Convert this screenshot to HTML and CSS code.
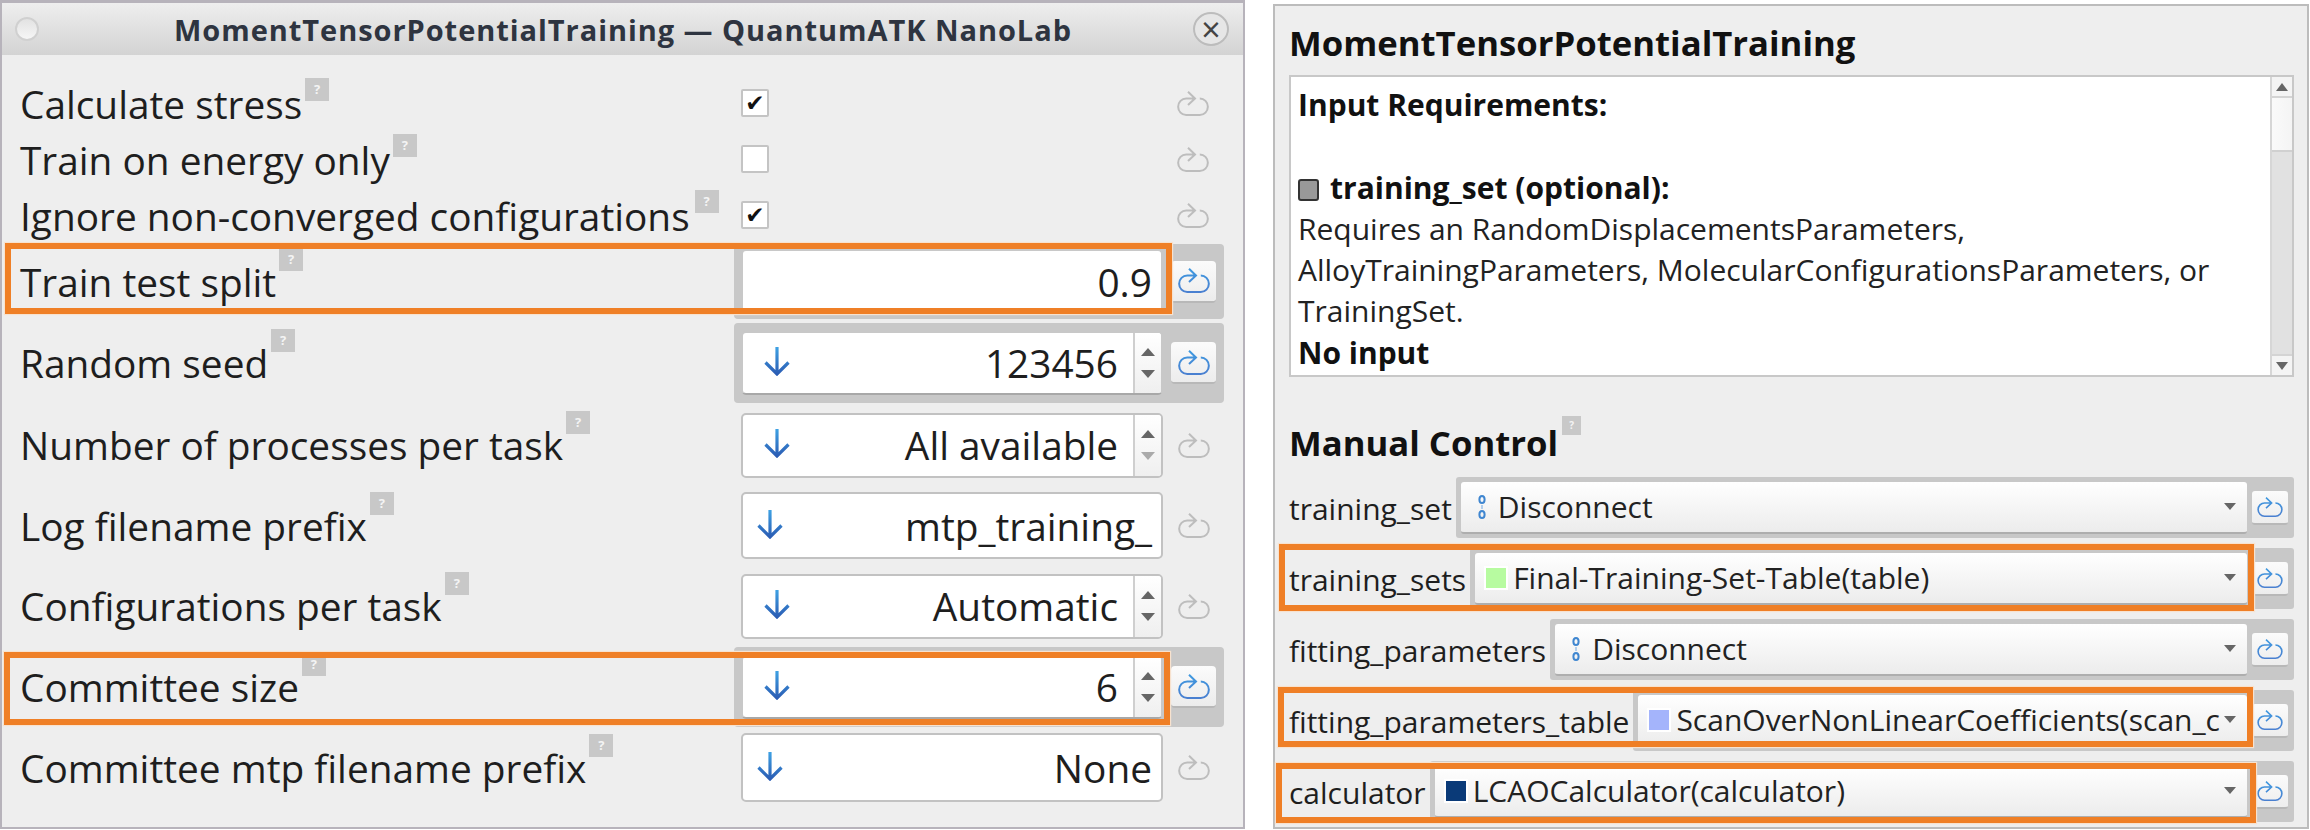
FILE: index.html
```html
<!DOCTYPE html>
<html lang="en">
<head>
<meta charset="utf-8">
<title>MomentTensorPotentialTraining</title>
<link rel="stylesheet" href="styles.css">
</head>
<body>
<svg class="defs" width="0" height="0" aria-hidden="true">
  <defs>
    <linearGradient id="blue" x1="0" y1="0" x2="0" y2="1">
      <stop offset="0" stop-color="#3ea2e4"/>
      <stop offset="1" stop-color="#2b5db4"/>
    </linearGradient>
    <linearGradient id="blueLoop" gradientUnits="userSpaceOnUse" x1="0" y1="0" x2="0" y2="25">
      <stop offset="0" stop-color="#3f9ae0"/>
      <stop offset="1" stop-color="#4a7fd0"/>
    </linearGradient>
    <symbol id="loop" viewBox="0 0 32 25">
      <path d="M11 .8 18 7.5 11 14M18 7.5H9.2A8 8.2 0 0 0 9.2 24H22.8A8 8.2 0 0 0 22.8 7.5" fill="none" stroke-width="2"/>
    </symbol>
    <symbol id="down" viewBox="0 0 28 30">
      <path d="M14 1V28M2.5 16.5 14 28 25.5 16.5" fill="none" stroke="url(#blue)" stroke-width="3.2"/>
    </symbol>
    <symbol id="link" viewBox="0 0 8 24">
      <g fill="none" stroke="#3f86d0" stroke-width="2"><ellipse cx="4" cy="4.5" rx="2.6" ry="3.5"/><ellipse cx="4" cy="19.5" rx="2.6" ry="3.5"/></g>
      <path d="M4 10v4" stroke="#9cc2e8" stroke-width="1.5"/>
    </symbol>
  </defs>
</svg>

<main class="desk">
  <section class="win">
    <header class="titlebar">
      <span class="dot"></span>
      <span class="wintitle">MomentTensorPotentialTraining — QuantumATK NanoLab</span>
      <span class="close">×</span>
    </header>
    <div class="form">
      <div class="row row-check">
        <div class="lab"><span>Calculate stress</span><i class="help">?</i></div>
        <div class="group"><span class="check">✔</span><span class="reset"><svg class="loop"><use href="#loop"/></svg></span></div>
      </div>
      <div class="row row-check">
        <div class="lab"><span>Train on energy only</span><i class="help">?</i></div>
        <div class="group"><span class="check"></span><span class="reset"><svg class="loop"><use href="#loop"/></svg></span></div>
      </div>
      <div class="row row-check">
        <div class="lab"><span>Ignore non-converged configurations</span><i class="help help-wide">?</i></div>
        <div class="group"><span class="check">✔</span><span class="reset"><svg class="loop"><use href="#loop"/></svg></span></div>
      </div>

      <div class="row row-split">
        <div class="lab"><span>Train test split</span><i class="help">?</i></div>
        <div class="group on"><div class="input"><span class="val">0.9</span></div><span class="reset btn"><svg class="loop"><use href="#loop"/></svg></span></div>
      </div>
      <div class="row row-seed">
        <div class="lab"><span>Random seed</span><i class="help">?</i></div>
        <div class="group on"><div class="input spin"><svg class="arrow"><use href="#down"/></svg><span class="val">123456</span><span class="spinner"><b class="up"></b><b class="dn"></b></span></div><span class="reset btn"><svg class="loop"><use href="#loop"/></svg></span></div>
      </div>
      <div class="row row-proc">
        <div class="lab"><span>Number of processes per task</span><i class="help">?</i></div>
        <div class="group"><div class="input spin"><svg class="arrow"><use href="#down"/></svg><span class="val">All available</span><span class="spinner"><b class="up"></b><b class="dn off"></b></span></div><span class="reset"><svg class="loop"><use href="#loop"/></svg></span></div>
      </div>
      <div class="row row-log">
        <div class="lab"><span>Log filename prefix</span><i class="help">?</i></div>
        <div class="group"><div class="input"><svg class="arrow"><use href="#down"/></svg><span class="val">mtp_training_</span></div><span class="reset"><svg class="loop"><use href="#loop"/></svg></span></div>
      </div>
      <div class="row row-auto">
        <div class="lab"><span>Configurations per task</span><i class="help">?</i></div>
        <div class="group"><div class="input spin"><svg class="arrow"><use href="#down"/></svg><span class="val">Automatic</span><span class="spinner"><b class="up"></b><b class="dn"></b></span></div><span class="reset"><svg class="loop"><use href="#loop"/></svg></span></div>
      </div>
      <div class="row row-size">
        <div class="lab"><span>Committee size</span><i class="help">?</i></div>
        <div class="group on"><div class="input spin"><svg class="arrow"><use href="#down"/></svg><span class="val">6</span><span class="spinner"><b class="up"></b><b class="dn"></b></span></div><span class="reset btn"><svg class="loop"><use href="#loop"/></svg></span></div>
      </div>
      <div class="row row-none">
        <div class="lab"><span>Committee mtp filename prefix</span><i class="help">?</i></div>
        <div class="group"><div class="input"><svg class="arrow"><use href="#down"/></svg><span class="val">None</span></div><span class="reset"><svg class="loop"><use href="#loop"/></svg></span></div>
      </div>
    </div>
    <div class="mark mark-split"></div>
    <div class="mark mark-size"></div>
  </section>

  <section class="panel">
    <h1 class="ptitle">MomentTensorPotentialTraining</h1>
    <div class="textbox">
      <div class="doc">
        <p class="b">Input Requirements:</p>
        <p>&nbsp;</p>
        <p class="b"><span class="port"></span>training_set (optional):</p>
        <p>Requires an RandomDisplacementsParameters,</p>
        <p>AlloyTrainingParameters, MolecularConfigurationsParameters, or</p>
        <p>TrainingSet.</p>
        <p class="b">No input</p>
      </div>
      <div class="scroll">
        <span class="sbtn"><b class="up"></b></span>
        <span class="thumb"></span>
        <span class="trough"></span>
        <span class="sbtn sbtn-end"><b class="dn"></b></span>
      </div>
    </div>
    <h2 class="manual"><span>Manual Control</span><i class="help help-sm">?</i></h2>
    <div class="ports">
      <div class="prow"><span class="plab">training_set</span><div class="pgroup"><div class="combo"><svg class="linkic"><use href="#link"/></svg><span class="ctext">Disconnect</span><b class="dn"></b></div><span class="reset pbtn"><svg class="loop"><use href="#loop"/></svg></span></div></div>
      <div class="prow"><span class="plab">training_sets</span><div class="pgroup"><div class="combo"><span class="sw sw-green"></span><span class="ctext">Final-Training-Set-Table(table)</span><b class="dn"></b></div><span class="reset pbtn"><svg class="loop"><use href="#loop"/></svg></span></div></div>
      <div class="prow"><span class="plab">fitting_parameters</span><div class="pgroup"><div class="combo"><svg class="linkic"><use href="#link"/></svg><span class="ctext">Disconnect</span><b class="dn"></b></div><span class="reset pbtn"><svg class="loop"><use href="#loop"/></svg></span></div></div>
      <div class="prow"><span class="plab">fitting_parameters_table</span><div class="pgroup"><div class="combo"><span class="sw sw-blue"></span><span class="ctext">ScanOverNonLinearCoefficients(scan_c</span><b class="dn"></b></div><span class="reset pbtn"><svg class="loop"><use href="#loop"/></svg></span></div></div>
      <div class="prow"><span class="plab">calculator</span><div class="pgroup"><div class="combo"><span class="sw sw-navy"></span><span class="ctext">LCAOCalculator(calculator)</span><b class="dn"></b></div><span class="reset pbtn"><svg class="loop"><use href="#loop"/></svg></span></div></div>
    </div>
    <div class="mark mark-sets"></div>
    <div class="mark mark-table"></div>
    <div class="mark mark-calc"></div>
  </section>
</main>
</body>
</html>
```

FILE: styles.css
```css
* { box-sizing: border-box; }
html, body { margin: 0; padding: 0; background: #fff; }
body { font-family: "Open Sans", "Noto Sans", sans-serif; color: #1e1e1e; }
.defs { position: absolute; }
.desk { display: flex; align-items: flex-start; width: 2310px; height: 830px; }

/* left window */
.win {
  position: relative; width: 1245px; height: 829px; flex: none;
  background: #eee; border: 2px solid #b7b3bb; border-top-width: 3px;
}
.titlebar {
  display: flex; align-items: center; justify-content: space-between;
  height: 52px; padding: 0 14px 0 13px;
  background: linear-gradient(#eeeeee, #d3d3d3);
}
.dot { width: 24px; height: 24px; border-radius: 50%; background: linear-gradient(#e2e2e2, #f6f6f6); border: 2px solid #d0d0d0; }
.wintitle { font-weight: 700; font-size: 29px; letter-spacing: .95px; margin-left: 14px; color: #2e3440; white-space: nowrap; }
.close {
  width: 36px; height: 34px; border-radius: 50%; border: 2px solid #bcbcbc; background: #e6e6e6;
  display: flex; align-items: center; justify-content: center;
  font-size: 34px; line-height: 1; color: #444;
}
.form { display: flex; flex-direction: column; padding: 20px 0 0 18px; }
.row { display: flex; align-items: center; justify-content: space-between; }
.row-check { height: 56px; }
.row-split { height: 75px; margin-top: 1px; margin-bottom: 4px; }
.row-seed { height: 80px; margin-bottom: 9px; }
.row-proc { height: 66px; margin-bottom: 14px; }
.row-log { height: 67px; margin-bottom: 14px; }
.row-auto { height: 66px; margin-bottom: 8px; }
.row-size { height: 80px; margin-bottom: 6px; }
.row-none { height: 69px; }

.lab { display: flex; align-items: flex-start; height: 64px; font-size: 38.8px; line-height: 64px; white-space: nowrap; }
.row-check .lab { height: 56px; line-height: 56px; padding-top: 1px; }
.help {
  display: flex; align-items: center; justify-content: center;
  width: 24px; height: 23px; margin: -2px 0 0 3px;
  background: #c8c8c8; color: #f4f4f4; font-style: normal; font-weight: 700; font-size: 13px; line-height: 23px;
}
.row-check .help { margin-top: 2px; }
.help-wide { margin-left: 5px; }

.group {
  display: flex; align-items: center; gap: 8px; width: 490px; height: 100%;
  padding: 0 9px 0 7px; margin-right: 19px; border-radius: 4px;
}
.group.on { background: #c8c8c8; }
.check {
  width: 28px; height: 28px; background: #fff; border: 2px solid #c4c4c4; border-radius: 2px;
  display: flex; align-items: center; justify-content: center;
  font-size: 23px; line-height: 1; color: #111; font-family: "DejaVu Sans", sans-serif;
}
.row-check .reset { margin-left: auto; }
.reset { display: flex; align-items: center; justify-content: center; width: 45px; height: 42px; flex: none; }
.reset .loop { width: 32px; height: 25px; stroke: #bdbdbd; }
.btn { background: linear-gradient(#fbfbfb, #ececec); border-radius: 4px; border-bottom: 2px solid #b8b8b8; }
.btn .loop { stroke: url(#blueLoop); }

.input {
  display: flex; align-items: center; flex: none; width: 422px; height: 65px;
  background: #fff; border: 2px solid #c2c2c2; border-radius: 5px; padding: 0 9px 0 13px;
  font-size: 38.8px; overflow: hidden;
}
.group.on .input { border-color: #c8c8c8 #c8c8c8 #a8a8a8; }
.row-seed .input, .row-size .input { height: 64px; }
.row-log .input { height: 67px; }
.row-none .input { height: 69px; }
.input.spin { padding: 0 0 0 20px; }
.arrow { width: 28px; height: 30px; flex: none; margin-bottom: 4px; }
.val { flex: 1; text-align: right; white-space: nowrap; }
.spinner {
  display: flex; flex-direction: column; justify-content: center; align-items: center; gap: 14px;
  align-self: stretch; width: 28px; margin-left: 15px; flex: none;
  border-left: 2px solid #cfcfcf; background: linear-gradient(#fff, #efefef);
}
.up, .dn { display: block; width: 0; height: 0; border-left: 7px solid transparent; border-right: 7px solid transparent; }
.up { border-bottom: 8px solid #666; }
.dn { border-top: 8px solid #666; }
.dn.off { border-top-color: #aaa; }

/* orange callouts */
.mark { position: absolute; border: 6px solid #ef7f26; box-shadow: 0 0 1px 1px #f7e2cf; pointer-events: none; }
.mark-split { left: 3px; top: 240px; width: 1167px; height: 71px; }
.mark-size { left: 2px; top: 649px; width: 1166px; height: 73px; }

/* right panel */
.panel {
  position: relative; width: 1036px; height: 825px; margin: 4px 0 0 28px; flex: none;
  background: #eee; border: 2px solid #bcbcbc; padding: 0 13px 0 14px;
}
.ptitle { margin: 0; height: 69px; font-size: 34.7px; line-height: 74px; font-weight: 700; color: #111; }
.textbox { display: flex; height: 302px; background: #fff; border: 2px solid #c8c8c8; overflow: hidden; }
.doc { flex: 1; padding: 7px 0 0 7px; font-size: 30px; line-height: 41.3px; color: #222; white-space: nowrap; overflow: hidden; }
.doc p { margin: 0; }
.doc .b { font-weight: 700; color: #111; }
.port { display: inline-block; width: 21px; height: 22px; margin-right: 11px; vertical-align: -2px; background: #999; border: 2px solid #333; border-radius: 3px; }
.scroll { display: flex; flex-direction: column; width: 22px; flex: none; border-left: 2px solid #d6d6d6; }
.sbtn { display: flex; align-items: center; justify-content: center; height: 21px; background: #f4f4f4; flex: none; border-bottom: 2px solid #d4d4d4; }
.sbtn-end { border-bottom: 0; border-top: 2px solid #d4d4d4; }
.sbtn .up, .sbtn .dn { border-left-width: 6px; border-right-width: 6px; }
.thumb { height: 54px; flex: none; background: linear-gradient(90deg, #fafafa, #f4f4f4); border-bottom: 2px solid #d0d0d0; }
.trough { flex: 1; background: #e1e1e1; }

.manual { display: flex; align-items: flex-start; margin: 0; height: 100px; padding-top: 44px; font-size: 34.7px; line-height: 44px; font-weight: 700; color: #111; }
.help-sm { width: 19px; height: 19px; font-size: 10px; margin: -5px 0 0 4px; }

.ports { display: flex; flex-direction: column; gap: 10px; }
.prow { display: flex; align-items: center; height: 61px; }
.plab { font-size: 30px; margin-right: 4px; white-space: nowrap; padding-top: 2px; }
.pgroup { display: flex; align-items: center; gap: 5px; flex: 1; min-width: 0; height: 100%; padding: 0 6px 0 5px; background: #c8c8c8; border-radius: 3px; }
.combo {
  display: flex; align-items: center; flex: 1; min-width: 0; height: 52px; padding: 0 8px 0 11px;
  background: linear-gradient(#fff, #ececec); border-bottom: 2px solid #aeaeae; border-radius: 3px;
  font-size: 30px; color: #222;
}
.ctext { flex: 1; white-space: nowrap; }
.combo .dn { flex: none; margin: 0 3px 0 0; border-left-width: 6px; border-right-width: 6px; border-top-width: 7px; }
.sw { width: 20px; height: 20px; margin-right: 7px; flex: none; box-shadow: 0 0 0 2px #fff; }
.sw-green { background: #b7fba0; }
.sw-blue { background: #a4b4fb; }
.sw-navy { background: #0a3a78; }
.linkic { width: 8px; height: 24px; margin: 0 12px 0 6px; flex: none; }
.pbtn { width: 36px; height: 34px; background: linear-gradient(#fbfbfb, #ededed); border-radius: 3px; border-bottom: 2px solid #b8b8b8; }
.pbtn .loop { width: 26px; height: 20px; stroke: url(#blueLoop); }

.mark-sets { left: 4px; top: 538px; width: 975px; height: 67px; }
.mark-table { left: 3px; top: 681px; width: 975px; height: 60px; }
.mark-calc { left: 1px; top: 757px; width: 980px; height: 60px; }
```
